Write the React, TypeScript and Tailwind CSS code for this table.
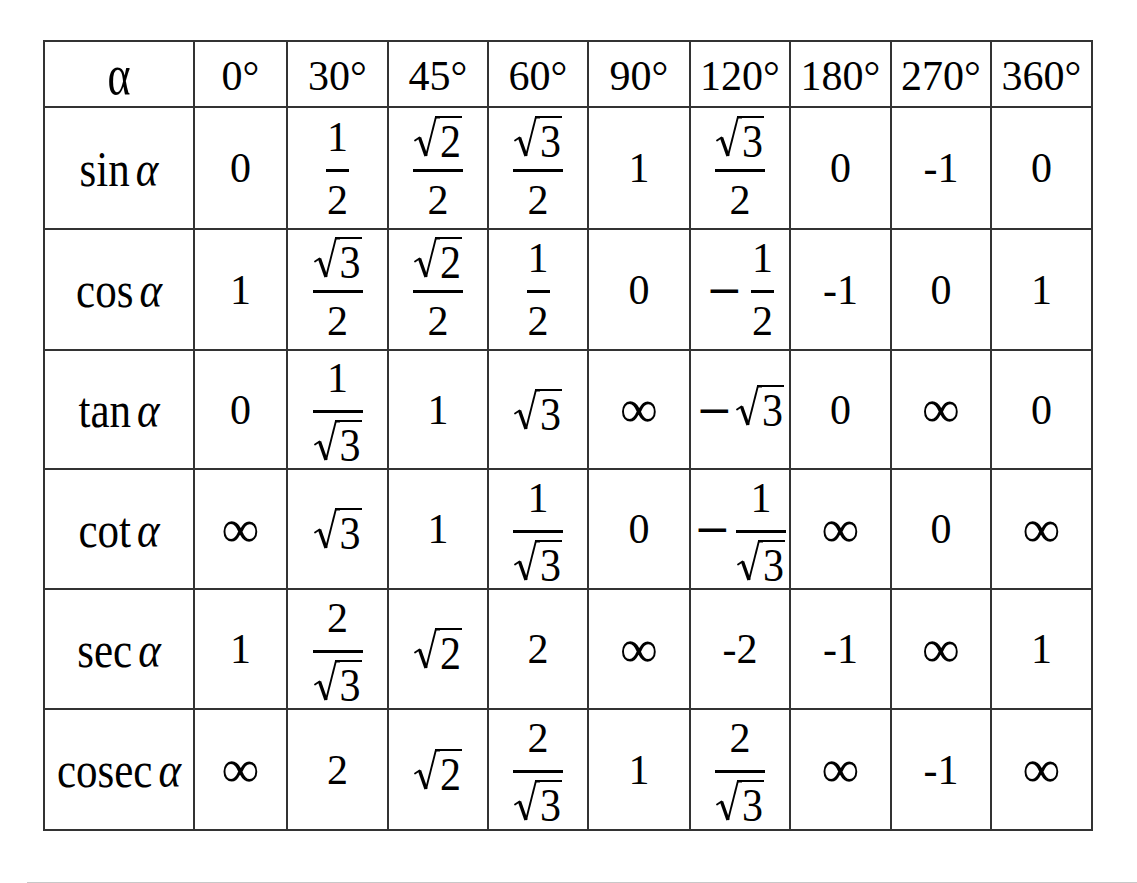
import React from "react";

type C = React.ReactNode;

function Sq({ d }: { d: string }) {
  return (
    <span className="inline-flex items-start">
      <svg width="26" height="42" viewBox="0 0 26 42" className="block shrink-0">
        <path d="M1 24.5 L5.5 21.5" stroke="#000" strokeWidth="1.7" fill="none" strokeLinecap="round" />
        <path d="M5.5 21.5 L12 40" stroke="#000" strokeWidth="3.4" fill="none" />
        <path d="M12 40 L21.8 1.6" stroke="#000" strokeWidth="1.9" fill="none" />
        <path d="M21 1.25 H26" stroke="#000" strokeWidth="2.5" fill="none" />
      </svg>
      <span className="block h-[42px] border-t-[2.5px] border-black pr-px">
        <span className="inline-block origin-top scale-y-[1.12] leading-[36px]">{d}</span>
      </span>
    </span>
  );
}

function Fr({ n, d }: { n: C; d: C }) {
  return (
    <span className="inline-flex flex-col items-stretch">
      <span className="flex justify-center px-px leading-none">{n}</span>
      <span className="mt-[11px] mb-[7px] block h-[3px] bg-black" />
      <span className="flex justify-center px-px leading-none">{d}</span>
    </span>
  );
}

function Minus() {
  return <span className="font-['DejaVu_Serif',serif] text-[44px] leading-none">−</span>;
}

function Neg({ children, gap }: { children: C; gap: string }) {
  return (
    <span className="inline-flex items-center">
      <Minus />
      <span className={gap}>{children}</span>
    </span>
  );
}

function Lab({ f }: { f: string }) {
  return (
    <span className="inline-block origin-center scale-y-[1.18] whitespace-nowrap text-[43px] leading-none">
      {f}
      <span className="ml-[6px] italic">α</span>
    </span>
  );
}

function Inf() {
  return <span className="text-[53px] leading-none">∞</span>;
}

const header: C[] = [
  <span className="inline-block origin-center scale-y-[1.3] text-[44px] leading-none">α</span>,
  "0°",
  "30°",
  "45°",
  "60°",
  "90°",
  "120°",
  "180°",
  "270°",
  "360°",
];

const rows: C[][] = [
  [<Lab f="sin" />, "0", <Fr n="1" d="2" />, <Fr n={<Sq d="2" />} d="2" />, <Fr n={<Sq d="3" />} d="2" />, "1", <Fr n={<Sq d="3" />} d="2" />, "0", "-1", "0"],
  [<Lab f="cos" />, "1", <Fr n={<Sq d="3" />} d="2" />, <Fr n={<Sq d="2" />} d="2" />, <Fr n="1" d="2" />, "0", <Neg gap="ml-[8px]"><Fr n="1" d="2" /></Neg>, "-1", "0", "1"],
  [<Lab f="tan" />, "0", <Fr n="1" d={<Sq d="3" />} />, "1", <Sq d="3" />, <Inf />, <Neg gap="ml-[3px]"><Sq d="3" /></Neg>, "0", <Inf />, "0"],
  [<Lab f="cot" />, <Inf />, <Sq d="3" />, "1", <Fr n="1" d={<Sq d="3" />} />, "0", <Neg gap="ml-[5px]"><Fr n="1" d={<Sq d="3" />} /></Neg>, <Inf />, "0", <Inf />],
  [<Lab f="sec" />, "1", <Fr n="2" d={<Sq d="3" />} />, <Sq d="2" />, "2", <Inf />, "-2", "-1", <Inf />, "1"],
  [<Lab f="cosec" />, <Inf />, "2", <Sq d="2" />, <Fr n="2" d={<Sq d="3" />} />, "1", <Fr n="2" d={<Sq d="3" />} />, <Inf />, "-1", <Inf />],
];

export default function App() {
  return (
    <div className="h-[883px] w-[1137px] overflow-hidden bg-white font-['Liberation_Serif',serif] text-black">
      <div className="ml-[43px] mt-[40px] grid w-fit grid-cols-[148px_91px_99px_98px_98px_100px_98px_99px_98px_99px] grid-rows-[64px_120px_119px_117px_118px_118px_119px] gap-[2px] bg-[#333] p-[2px]">
        {header.map((h, i) => (
          <div key={"h" + i} className="flex items-center justify-center bg-white pt-[4px] text-[42px] leading-none">
            {h}
          </div>
        ))}
        {rows.map((r, ri) =>
          r.map((c, ci) => (
            <div key={ri + "-" + ci} className="flex items-center justify-center whitespace-nowrap bg-white text-[42px] leading-none">
              {c}
            </div>
          ))
        )}
      </div>
      <div className="ml-[27px] mt-[51px] h-px bg-[#c8c8c8]" />
    </div>
  );
}
